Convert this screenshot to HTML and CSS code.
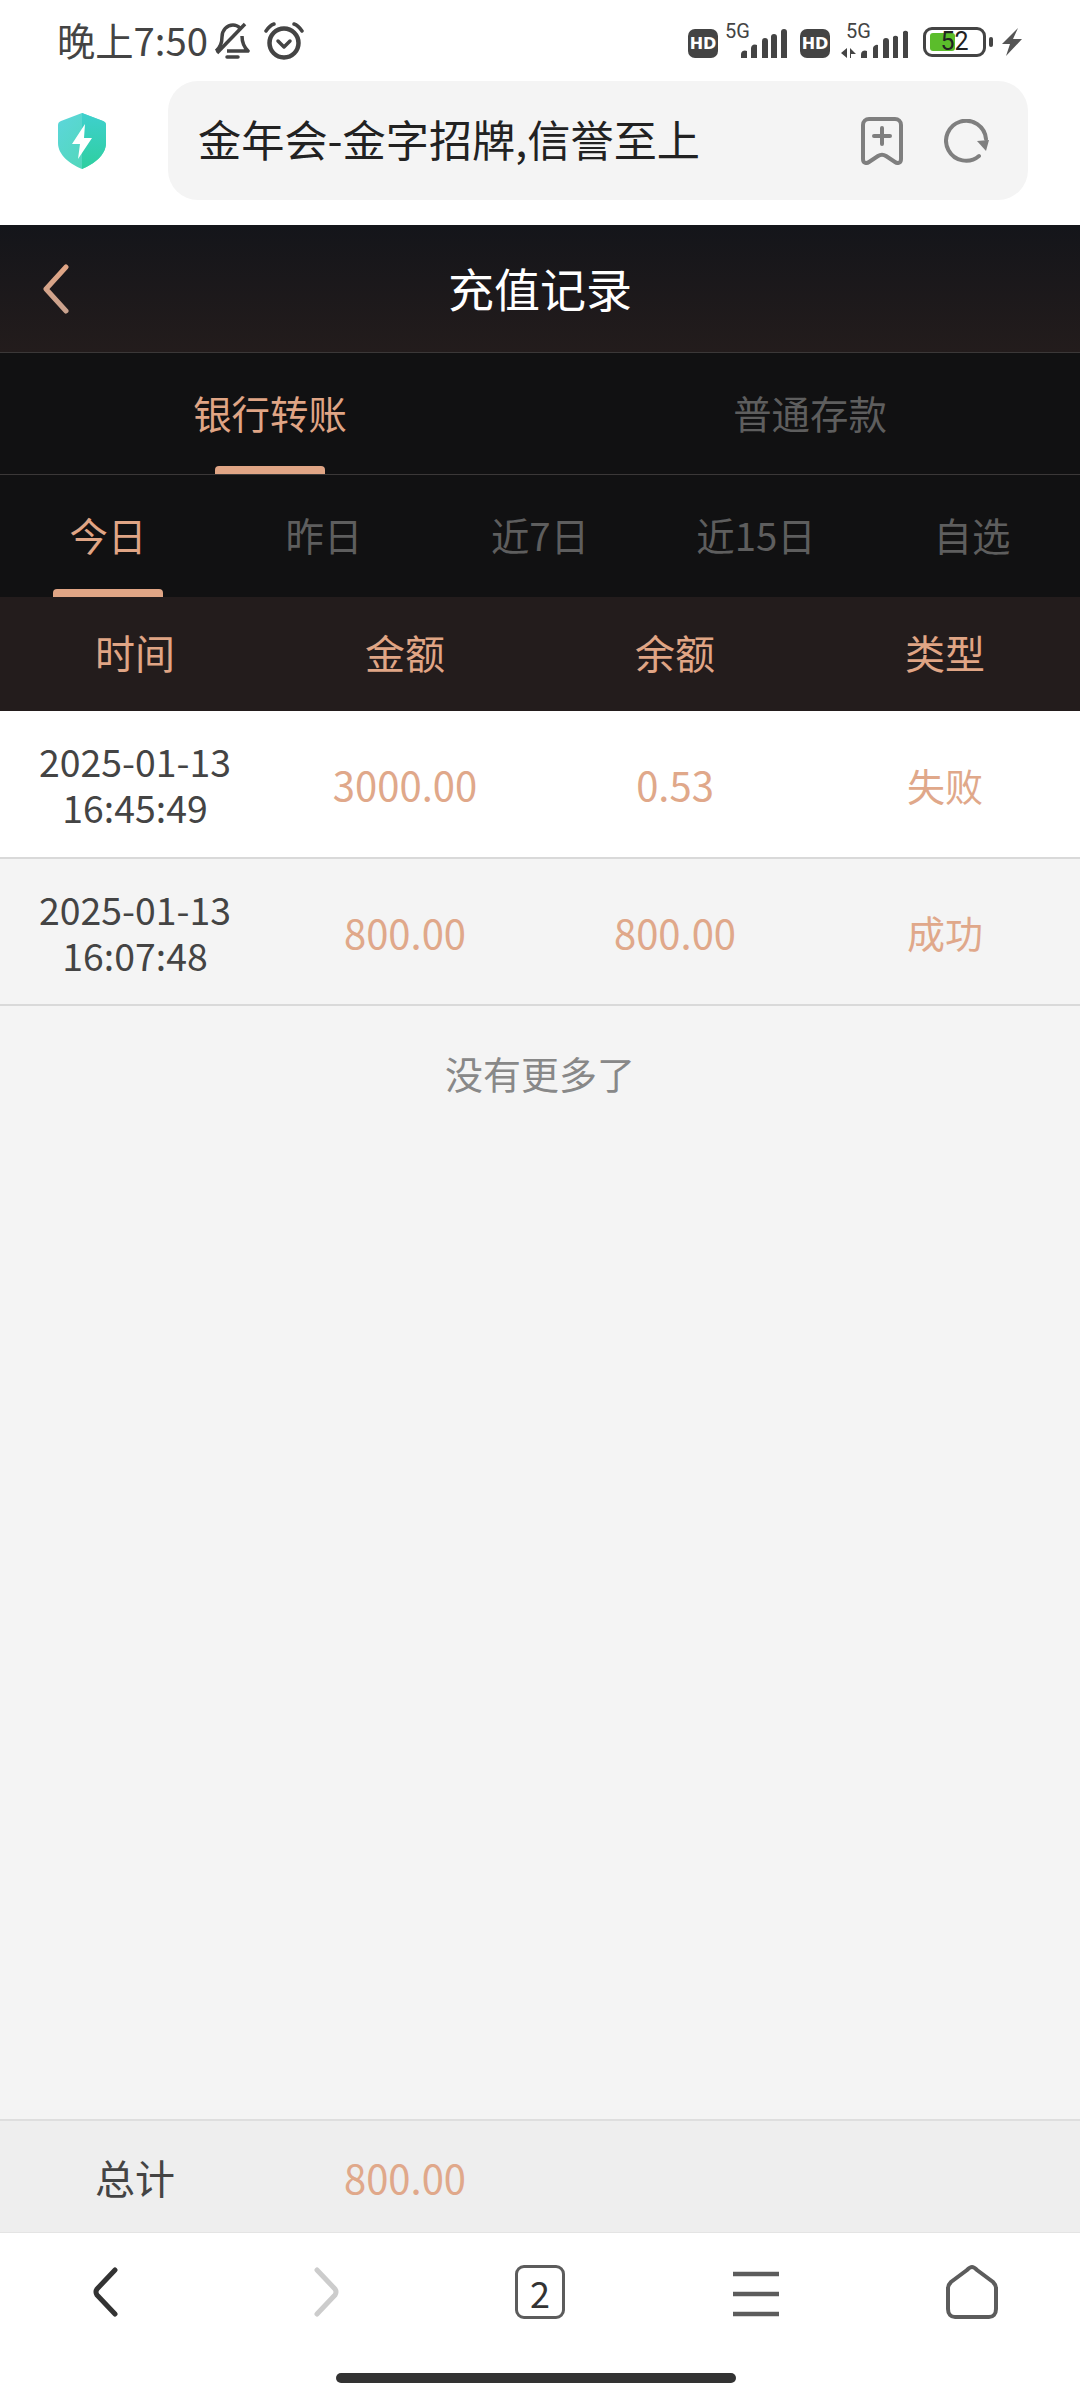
FILE: index.html
```html
<!DOCTYPE html>
<html>
<head>
    <meta charset="utf-8" />
    <title>充值记录</title>
    <link rel="stylesheet" href="styles.css">
</head>
<body>
    <div class="statusBar">
        <div class="statusLeft">
            <span class="clock">晚上7:50</span>
            <svg class="bell" width="36" height="38" viewBox="0 0 36 38">
                <path d="M2 29 C7 25 8 20 8 15 C8 8 13 3 19 3 C22 3 24 4 26 6 M28 14 C28 20 30 25 34 29 H13" fill="none" stroke="#444" stroke-width="3.5" stroke-linejoin="round"/>
                <path d="M3 31 L31 2" stroke="#444" stroke-width="3.5"/>
                <path d="M13 35 H24" stroke="#444" stroke-width="3.5" stroke-linecap="round"/>
            </svg>
            <svg class="alarm" width="40" height="38" viewBox="0 0 40 38">
                <circle cx="20" cy="21" r="14.5" fill="none" stroke="#444" stroke-width="4.5"/>
                <path d="M14 19 L20 25 L26 19" fill="none" stroke="#444" stroke-width="3.5" stroke-linecap="round" stroke-linejoin="round"/>
                <path d="M2 9 C4 6 7 3 10 2 M30 2 C33 3 36 6 38 9" fill="none" stroke="#444" stroke-width="3.5" stroke-linecap="round"/>
            </svg>
        </div>
        <div class="statusRight">
            <svg class="simOne" width="104" height="48" viewBox="0 -8 104 48">
                <rect x="0" y="8" width="30" height="29" rx="7" fill="#444"/>
                <text x="15" y="28" class="hdText" text-anchor="middle">HD</text>
                <text x="37" y="17" class="fiveG">5G</text>
                <path d="M53 37 v-3 a4 4 0 0 1 6 -4 v7 z M63 37 v-10 a4 4 0 0 1 6 -3 v13 z M74 37 v-17 a3 3 0 0 1 6 0 v17 z M83 37 v-21 a3 3 0 0 1 6 0 v21 z M93 37 v-26 a3 3 0 0 1 6 0 v26 z" fill="#444"/>
            </svg>
            <svg class="simTwo" width="112" height="48" viewBox="0 -8 112 48">
                <rect x="0" y="8" width="30" height="29" rx="7" fill="#444"/>
                <text x="15" y="28" class="hdText" text-anchor="middle">HD</text>
                <text x="46" y="17" class="fiveG">5G</text>
                <path d="M47 27 v10 l-6 -5 z M50 27 v10 h1 v-4 h5 l-6 -6 z" fill="#444"/>
                <path d="M61 37 v-3 a4 4 0 0 1 6 -4 v7 z M73 37 v-10 a4 4 0 0 1 5 -3 v13 z M83 37 v-17 a3 3 0 0 1 6 0 v17 z M93 37 v-21 a3 3 0 0 1 5 0 v21 z M103 37 v-26 a3 3 0 0 1 5 0 v26 z" fill="#444"/>
            </svg>
            <div class="battery">
                <div class="batteryFill"></div>
                <span class="batteryText">52</span>
            </div>
            <div class="batteryNub"></div>
            <svg class="bolt" width="20" height="28" viewBox="0 0 20 28">
                <path d="M16 0 L0 16 H8 L4 28 L20 11 H11 Z" fill="#555"/>
            </svg>
        </div>
    </div>

    <div class="browserBar">
        <svg class="shield" width="48" height="56" viewBox="0 0 48 56">
            <defs>
                <linearGradient id="shieldLeft" x1="0" y1="0" x2="1" y2="1">
                    <stop offset="0" stop-color="#5cd6dc"/>
                    <stop offset="1" stop-color="#4fd8b0"/>
                </linearGradient>
                <linearGradient id="shieldRight" x1="0" y1="0" x2="0" y2="1">
                    <stop offset="0" stop-color="#3fd0ce"/>
                    <stop offset="1" stop-color="#2ecf9f"/>
                </linearGradient>
            </defs>
            <path d="M24 0 L45 8 Q48 9 48 12 V30 C48 42 36 51 24 56 C12 51 0 42 0 30 V12 Q0 9 3 8 Z" fill="url(#shieldLeft)"/>
            <path d="M24 0 L45 8 Q48 9 48 12 V30 C48 42 36 51 24 56 Z" fill="url(#shieldRight)"/>
            <path d="M27 11 L14 31 H22 L20 46 L34 25 H26 Z" fill="#fff"/>
        </svg>
        <div class="urlPill">
            <span class="urlText">金年会-金字招牌,信誉至上</span>
            <svg width="42" height="48" viewBox="0 0 42 48">
                <path d="M2 8 a6 6 0 0 1 6 -6 H34 a6 6 0 0 1 6 6 V42 C40 46 37 47 34 45 L25 39 C22 37 20 37 17 39 L8 45 C5 47 2 46 2 42 Z" fill="none" stroke="#7f7f7f" stroke-width="4"/>
                <path d="M21 11 V27 M13 19 H29" stroke="#7f7f7f" stroke-width="4" stroke-linecap="round"/>
            </svg>
            <svg class="reload" width="46" height="44" viewBox="0 0 46 44">
                <path d="M35 37 A20 20 0 1 1 42 20" fill="none" stroke="#7f7f7f" stroke-width="4" stroke-linecap="round"/>
                <path d="M33 22 L45 21 L42 32 Z" fill="#7f7f7f"/>
            </svg>
        </div>
    </div>

    <div class="navHeader">
        <svg class="navBack" width="32" height="50" viewBox="0 0 32 50">
            <defs>
                <linearGradient id="backFill" x1="0" y1="0" x2="0" y2="1">
                    <stop offset="0" stop-color="#e0a585"/>
                    <stop offset="1" stop-color="#c9a28e"/>
                </linearGradient>
            </defs>
            <path d="M26 3 L6 25 L26 47" fill="none" stroke="url(#backFill)" stroke-width="5" stroke-linecap="round" stroke-linejoin="round"/>
        </svg>
        <span class="navTitle">充值记录</span>
    </div>

    <div class="mainTabs">
        <div class="tab active">银行转账<i class="underline"></i></div>
        <div class="tab">普通存款</div>
    </div>

    <div class="dateTabs">
        <div class="tab active">今日<i class="underline"></i></div>
        <div class="tab">昨日</div>
        <div class="tab">近7日</div>
        <div class="tab">近15日</div>
        <div class="tab">自选</div>
    </div>

    <div class="tableHead">
        <div>时间</div>
        <div>金额</div>
        <div>余额</div>
        <div>类型</div>
    </div>

    <div class="content">
        <div class="row white">
            <div class="time">2025-01-13<br>16:45:49</div>
            <div class="amount">3000.00</div>
            <div class="amount">0.53</div>
            <div>失败</div>
        </div>
        <div class="row">
            <div class="time">2025-01-13<br>16:07:48</div>
            <div class="amount">800.00</div>
            <div class="amount">800.00</div>
            <div>成功</div>
        </div>
        <p class="noMore">没有更多了</p>
    </div>

    <div class="totalBar">
        <div class="totalLabel">总计</div>
        <div class="totalValue">800.00</div>
    </div>

    <div class="bottomNav">
        <svg class="backBtn" width="30" height="50" viewBox="0 0 30 50">
            <path d="M25 3 L7 22 Q5 25 7 28 L25 47" fill="none" stroke="#333" stroke-width="5" stroke-linecap="round" stroke-linejoin="round"/>
        </svg>
        <svg class="forwardBtn" width="30" height="50" viewBox="0 0 30 50">
            <path d="M5 3 L23 22 Q25 25 23 28 L5 47" fill="none" stroke="#ccc" stroke-width="5" stroke-linecap="round" stroke-linejoin="round"/>
        </svg>
        <div class="tabCount">2</div>
        <svg class="menuBtn" width="48" height="46" viewBox="0 0 48 46">
            <path d="M1 3 H47 M1 23 H47 M1 43 H47" stroke="#5c5c5c" stroke-width="4.5"/>
        </svg>
        <svg width="52" height="54" viewBox="0 0 52 54">
            <path d="M26 2 C24 2 23 3 21 5 L5 17 C3 19 2 20 2 23 V44 C2 49 5 52 9 52 H43 C47 52 50 49 50 44 V23 C50 20 49 19 47 17 L31 5 C29 3 28 2 26 2 Z" fill="none" stroke="#5c5c5c" stroke-width="4"/>
        </svg>
    </div>
    <div class="homeArea">
        <div class="homeBar"></div>
    </div>
</body>
</html>
```

FILE: styles.css
```css
* {
    box-sizing: border-box;
}

body {
    display: flex;
    flex-direction: column;
    width: 1080px;
    height: 2400px;
    margin: 0;
    background: #fff;
    font-family: "Noto Sans CJK SC", Roboto, sans-serif;
    overflow: hidden;
}

/* phone status bar */
.statusBar {
    display: flex;
    justify-content: space-between;
    align-items: center;
    height: 81px;
    padding: 0 58px 0 57px;
}

.statusLeft, .statusRight {
    display: flex;
    align-items: center;
}

.statusLeft {
    gap: 6px;
}

.clock {
    margin-bottom: 2px;
    font-size: 38.3px;
    line-height: 40px;
    color: #444;
}

.alarm {
    margin-left: 8px;
}

.simOne {
    margin-right: 8px;
    margin-bottom: 8px;
}

.simTwo {
    margin-right: 11px;
    margin-bottom: 8px;
}

.bolt {
    margin-left: 9px;
    margin-top: 2px;
}

.hdText {
    font: bold 16px "DejaVu Sans", sans-serif;
    fill: #fff;
}

.fiveG {
    font: 20px Roboto, sans-serif;
    fill: #444;
}

.battery {
    position: relative;
    display: flex;
    justify-content: center;
    align-items: center;
    width: 63px;
    height: 30px;
    margin-top: 3px;
    border: 3px solid #444;
    border-radius: 9px;
}

.batteryFill {
    position: absolute;
    left: 4px;
    top: 3px;
    width: 25px;
    height: 18px;
    background: #5bbd2b;
    border-radius: 3px;
}

.batteryText {
    position: relative;
    font: 25px/24px Roboto, sans-serif;
    color: #222;
}

.batteryNub {
    width: 4px;
    height: 10px;
    margin-left: 3px;
    margin-top: 3px;
    background: #444;
    border-radius: 2px;
}

/* browser address bar */
.browserBar {
    display: flex;
    align-items: center;
    height: 144px;
    padding: 0 52px 25px 58px;
}

.shield {
    flex: none;
}

.urlPill {
    display: flex;
    align-items: center;
    flex: 1;
    height: 119px;
    margin-left: 62px;
    padding: 0 38px 0 30px;
    background: #f4f4f4;
    border-radius: 30px;
}

.urlText {
    flex: 1;
    margin-bottom: 5px;
    font-size: 43.2px;
    line-height: 44px;
    color: #222;
    white-space: nowrap;
}

.reload {
    margin-left: 41px;
}

/* page header */
.navHeader {
    position: relative;
    display: flex;
    justify-content: center;
    align-items: center;
    height: 128px;
    background: linear-gradient(to bottom, #14151a, #231c1c);
    border-bottom: 1px solid #3b3838;
}

.navBack {
    position: absolute;
    left: 40px;
    top: 39px;
}

.navTitle {
    margin-bottom: 3px;
    font-size: 46px;
    color: #fff;
}

.mainTabs, .dateTabs {
    display: flex;
    background: #111112;
}

.mainTabs {
    height: 122px;
    border-bottom: 1px solid #3b3838;
}

.dateTabs {
    height: 122px;
}

.tab {
    position: relative;
    display: flex;
    flex: 1;
    justify-content: center;
    align-items: center;
    padding-bottom: 4px;
    font-size: 38.4px;
    color: #5e5e5e;
}

.tab.active {
    color: #e0a585;
}

.underline {
    position: absolute;
    bottom: 0;
    left: 50%;
    width: 110px;
    height: 8px;
    margin-left: -55px;
    background: #e0a585;
    border-radius: 4px 4px 0 0;
}

.tableHead, .row {
    display: grid;
    grid-template-columns: repeat(4, 1fr);
    align-items: center;
    text-align: center;
}

.tableHead {
    height: 114px;
    padding-bottom: 4px;
    background: #231c1c;
    font-size: 40px;
    color: #e0a585;
}

.content {
    flex: 1;
    background: #f4f4f4;
}

.row {
    height: 147px;
    font-size: 38px;
    color: #e0a88a;
    border-bottom: 2px solid #d9d9d9;
}

.row.white {
    height: 148px;
    background: #fff;
}

.time {
    font-size: 37.4px;
    line-height: 46px;
    color: #444;
}

.amount {
    font-size: 40px;
}

.noMore {
    margin: 0;
    padding-top: 39px;
    font-size: 38px;
    text-align: center;
    color: #888;
}

.totalBar {
    display: grid;
    grid-template-columns: repeat(4, 1fr);
    align-items: center;
    height: 114px;
    background: #eee;
    border-top: 2px solid #dedede;
    border-bottom: 1px solid #e4e4e4;
    text-align: center;
    font-size: 40px;
}

.totalLabel {
    color: #444;
}

.totalValue {
    color: #e0a88a;
}

/* browser bottom buttons */
.bottomNav {
    display: grid;
    grid-template-columns: repeat(5, 1fr);
    justify-items: center;
    align-items: center;
    height: 118px;
}

.backBtn {
    margin-right: 6px;
}

.forwardBtn {
    margin-left: 6px;
}

.menuBtn {
    margin-top: 3px;
}

.tabCount {
    display: flex;
    justify-content: center;
    align-items: center;
    width: 50px;
    height: 54px;
    border: 3.5px solid #5c5c5c;
    border-radius: 9px;
    font-size: 36px;
    color: #333;
}

.homeArea {
    display: flex;
    justify-content: center;
    height: 49px;
    padding: 22px 8px 0 0;
}

.homeBar {
    width: 400px;
    height: 10px;
    background: #333;
    border-radius: 5px;
}
```
